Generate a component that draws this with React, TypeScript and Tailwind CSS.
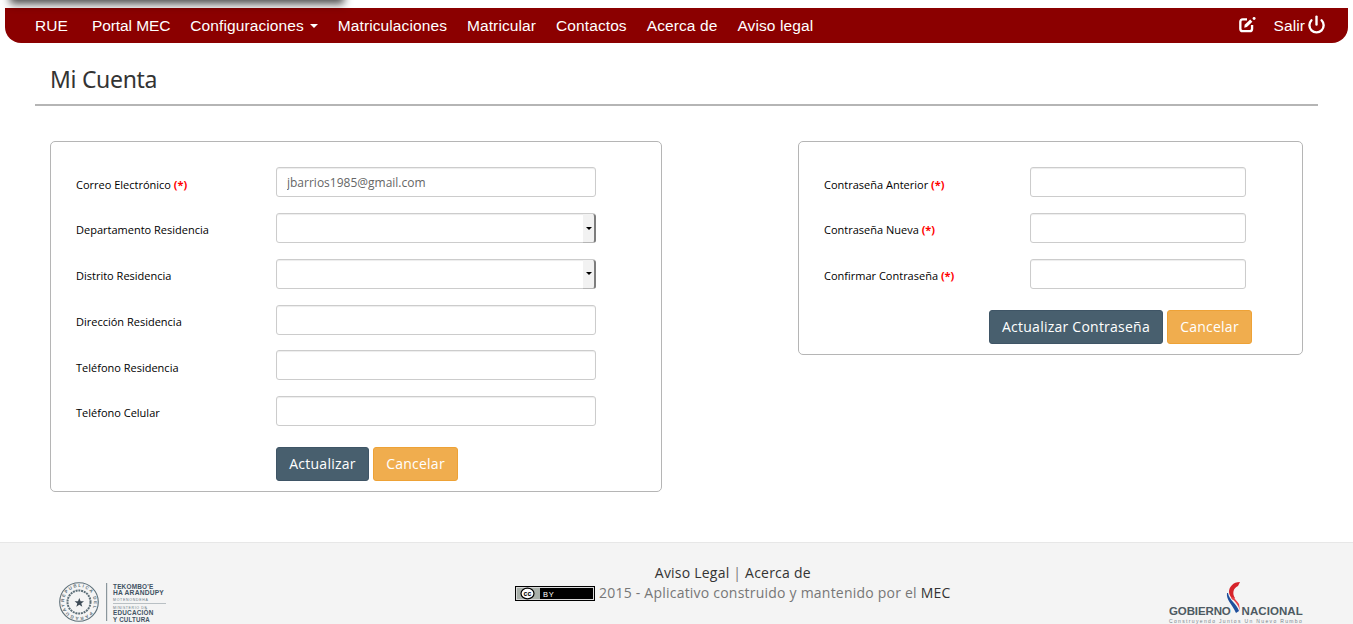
import { Power } from 'lucide-react';

const navItems = ['Portal MEC', 'Configuraciones', 'Matriculaciones', 'Matricular', 'Contactos', 'Acerca de', 'Aviso legal'];

function EditIcon() {
  return (
    <svg width="18" height="18" viewBox="0 0 17 17" fill="none" className="mb-[2px] text-white">
      <path d="M8.5 3.2H4.5Q2.2 3.2 2.2 5.5V12Q2.2 14.3 4.5 14.3H11Q13.3 14.3 13.3 12V8.5" stroke="currentColor" strokeWidth="2.2" />
      <path d="M6.3 8.3L11.5 3.4L13.6 5.5L8.4 10.5L5.9 11Z" fill="currentColor" />
      <circle cx="15.2" cy="2.3" r="1.4" fill="currentColor" />
    </svg>
  );
}

function Field({ label, required, value }: { label: string; required?: boolean; value?: string }) {
  return (
    <div className="flex items-start">
      <label className="w-[200px] pt-[9.4px] text-[11px] leading-[16px] font-medium text-black">
        {label} {required && <span className="font-bold text-[#f00]">(*)</span>}
      </label>
      <input
        readOnly
        value={value ?? ''}
        className="h-[30px] w-[320px] rounded-[3px] border border-[#ccc] bg-white px-[10px] text-[12px] text-[#666] shadow-[inset_0_1px_1px_rgba(0,0,0,0.075)] outline-none"
      />
    </div>
  );
}

function SelectField({ label }: { label: string }) {
  return (
    <div className="flex items-start">
      <label className="w-[200px] pt-[9.4px] text-[11px] leading-[16px] font-medium text-black">{label}</label>
      <div className="relative h-[30px] w-[320px]">
        <select className="h-full w-full appearance-none rounded-[3px] border border-[#ccc] bg-white shadow-[inset_0_1px_1px_rgba(0,0,0,0.075)] outline-none" />
        <div className="pointer-events-none absolute top-[1px] right-0 bottom-0 flex w-[13px] items-center justify-center rounded-r-[3px] border-r-2 border-b border-r-[#7d7d7d] border-b-[#b5b5b5] bg-[#f2f2f2]">
          <div className="h-0 w-0 border-x-[3.5px] border-t-[3.5px] border-x-transparent border-t-black" />
        </div>
      </div>
    </div>
  );
}

function PasswordField({ label }: { label: string }) {
  return (
    <div className="flex items-start">
      <label className="w-[206px] pt-[9.4px] text-[11px] leading-[16px] font-medium text-black">
        {label} <span className="font-bold text-[#f00]">(*)</span>
      </label>
      <input
        readOnly
        type="password"
        className="h-[30px] w-[216px] rounded-[3px] border border-[#ccc] bg-white shadow-[inset_0_1px_1px_rgba(0,0,0,0.075)] outline-none"
      />
    </div>
  );
}

function PrimaryButton({ children, wide }: { children: string; wide?: boolean }) {
  return (
    <button className={`h-[34px] rounded-[3px] border border-[#3f5566] bg-[#485f6e] text-[14px] tracking-[0.24px] text-white ${wide ? 'w-[174px]' : 'w-[93px]'}`}>
      {children}
    </button>
  );
}

function CancelButton() {
  return (
    <button className="h-[34px] w-[85px] rounded-[3px] border border-[#eea236] bg-[#f0ad4e] text-[14px] tracking-[0.24px] text-white">
      Cancelar
    </button>
  );
}

function CcBadge() {
  return (
    <svg width="80" height="15" viewBox="0 0 80 15" className="shrink-0">
      <rect width="80" height="15" fill="#000" />
      <rect x="1" y="1" width="78" height="13" fill="#d8d8d8" />
      <rect x="2" y="2" width="76" height="11" fill="#000" />
      <rect x="2" y="2" width="23" height="11" fill="#a9b0aa" />
      <ellipse cx="12.5" cy="7.5" rx="6.5" ry="5.3" fill="#fff" stroke="#000" strokeWidth="1.2" />
      <text x="12.5" y="10" textAnchor="middle" fontFamily="Liberation Sans" fontSize="7" fontWeight="700" fill="#000">cc</text>
      <text x="28" y="10.5" fontFamily="Liberation Sans" fontSize="7.5" fill="#fff" textLength="11">BY</text>
    </svg>
  );
}

function MecLogo() {
  return (
    <svg width="108" height="42" viewBox="0 0 108 42">
      <defs>
        <path id="seal-ring" d="M5 20A15 15 0 1 1 35 20A15 15 0 1 1 5 20" />
      </defs>
      <g fill="none" stroke="#5d6f78">
        <circle cx="20" cy="20" r="19.3" strokeWidth="1.1" />
        <circle cx="20" cy="20" r="11.5" strokeWidth="2" strokeDasharray="2 0.8" />
      </g>
      <text fontFamily="Liberation Sans" fontSize="4.4" fontWeight="700" fill="#5d6f78">
        <textPath href="#seal-ring" textLength="92">REPUBLICA DEL PARAGUAY</textPath>
      </text>
      <path d="M20.3 16l1.3 3.2 3.4.1-2.7 2.1 1 3.3-3-1.9-3 1.9 1-3.3-2.7-2.1 3.4-.1z" fill="#3d4a55" />
      <rect x="47" y="1" width="1.2" height="38" fill="#8a969c" />
      <g fontFamily="Liberation Sans" fontWeight="700" fill="#3f5263">
        <text x="54" y="6.5" fontSize="6.8" textLength="40.5" lengthAdjust="spacingAndGlyphs">TEKOMBO'E</text>
        <text x="54" y="13" fontSize="6.8" textLength="51" lengthAdjust="spacingAndGlyphs">HA ARANDUPY</text>
        <text x="54" y="18.5" fontSize="3.5" fontWeight="400" fill="#6c7c88" textLength="35">MOTENONDEHA</text>
        <text x="54" y="26.5" fontSize="3.5" fontWeight="400" fill="#6c7c88" textLength="34">MINISTERIO DE</text>
        <text x="54" y="33" fontSize="6.4" textLength="40.5" lengthAdjust="spacingAndGlyphs">EDUCACIÓN</text>
        <text x="54" y="39.5" fontSize="6.4" textLength="37" lengthAdjust="spacingAndGlyphs">Y CULTURA</text>
      </g>
      <rect x="54" y="21" width="53" height="1" fill="#b9c0c4" />
    </svg>
  );
}

function GobiernoLogo() {
  return (
    <svg width="136" height="44" viewBox="0 0 136 44">
      <path d="M72 2C65 2 61 7 61 12C61 15 63 17 65 20L67 18C64 14 65 8 70 6Z" fill="#d6232a" />
      <path d="M59 13C58 20 64 24 68 33L71 31C69 24 61 20 60 13Z" fill="#1f4f9c" />
      <path d="M63 18C67 21 71 26 72 31L71 24C69 21 67 19 65 17Z" fill="#e8424a" />
      <g fontFamily="Liberation Sans" fontSize="11.5" fontWeight="700" fill="#4d5a62">
        <text x="1" y="35" textLength="62">GOBIERNO</text>
        <text x="73.5" y="35" textLength="61.5">NACIONAL</text>
      </g>
      <text x="1" y="43" fontFamily="Liberation Sans" fontSize="5" fill="#77838a" textLength="133">Construyendo Juntos Un Nuevo Rumbo</text>
    </svg>
  );
}

export default function App() {
  return (
    <div className="relative flex h-screen flex-col overflow-hidden bg-white font-['Open_Sans',sans-serif] text-[#333]">
      <div className="absolute top-[-20px] left-[14px] h-[20px] w-[326px] shadow-[0_0_9px_4px_rgba(0,0,0,0.7)]" />

      <nav className="mx-[5px] mt-[8px] flex h-[35px] shrink-0 items-center rounded-b-[16px] bg-[#8b0000] pt-[1px] pr-[22px] pl-[30px] font-['Liberation_Sans',sans-serif] text-[15.5px] tracking-[0.1px] text-white">
        <span className="mr-[24px]">RUE</span>
        <div className="flex gap-[20px]">
          {navItems.map((item) => (
            <span key={item} className={item === 'Portal MEC' ? 'flex items-center tracking-[-0.1px]' : 'flex items-center'}>
              {item}
              {item === 'Configuraciones' && (
                <span className="ml-[6px] h-0 w-0 border-x-[4px] border-t-[4px] border-x-transparent border-t-white" />
              )}
            </span>
          ))}
        </div>
        <div className="ml-auto flex items-center">
          <EditIcon />
          <span className="ml-[17px]">Salir</span>
          <Power className="mb-[3px] ml-[2px]" size={19} strokeWidth={3} />
        </div>
      </nav>

      <div className="mx-[35px] mt-[20px] h-[43px] shrink-0 border-b-2 border-[#b5b5b5] pl-[15px]">
        <h1 className="font-['Noto_Sans',sans-serif] text-[23px] leading-[33px] tracking-[-0.3px] text-[#333]">Mi Cuenta</h1>
      </div>

      <main className="mt-[35px] flex shrink-0 items-start justify-between px-[50px]">
        <section className="h-[351px] w-[612px] rounded-[5px] border border-[#b5b5b5] px-[25px] pt-[25.4px]">
          <div className="flex flex-col gap-[15.714px]">
            <Field label="Correo Electrónico" required value="jbarrios1985@gmail.com" />
            <SelectField label="Departamento Residencia" />
            <SelectField label="Distrito Residencia" />
            <Field label="Dirección Residencia" />
            <Field label="Teléfono Residencia" />
            <Field label="Teléfono Celular" />
          </div>
          <div className="mt-[21px] ml-[200px] flex gap-[4px]">
            <PrimaryButton>Actualizar</PrimaryButton>
            <CancelButton />
          </div>
        </section>

        <section className="h-[214px] w-[505px] rounded-[5px] border border-[#b5b5b5] px-[25px] pt-[25.4px]">
          <div className="flex flex-col gap-[15.714px]">
            <PasswordField label="Contraseña Anterior" />
            <PasswordField label="Contraseña Nueva" />
            <PasswordField label="Confirmar Contraseña" />
          </div>
          <div className="mt-[21px] ml-[165px] flex gap-[4px]">
            <PrimaryButton wide>Actualizar Contraseña</PrimaryButton>
            <CancelButton />
          </div>
        </section>
      </main>

      <footer className="mt-auto grid h-[82px] shrink-0 grid-cols-[456px_auto_1fr] items-end border-t border-[#e7e7e7] bg-[#f4f4f4] pr-[49px] pl-[59px] text-[14px] tracking-[0.22px]">
        <MecLogo />
        <div className="mb-[21px] flex flex-col items-center leading-[20px]">
          <div>
            <span className="text-[#333]">Aviso Legal</span> <span className="text-[#777]">|</span> <span className="text-[#333]">Acerca de</span>
          </div>
          <div className="flex items-center gap-[4px] text-[#777]">
            <CcBadge />
            <span>
              2015 - Aplicativo construido y mantenido por el <span className="text-[#333]">MEC</span>
            </span>
          </div>
        </div>
        <div className="justify-self-end">
          <GobiernoLogo />
        </div>
      </footer>
    </div>
  );
}
